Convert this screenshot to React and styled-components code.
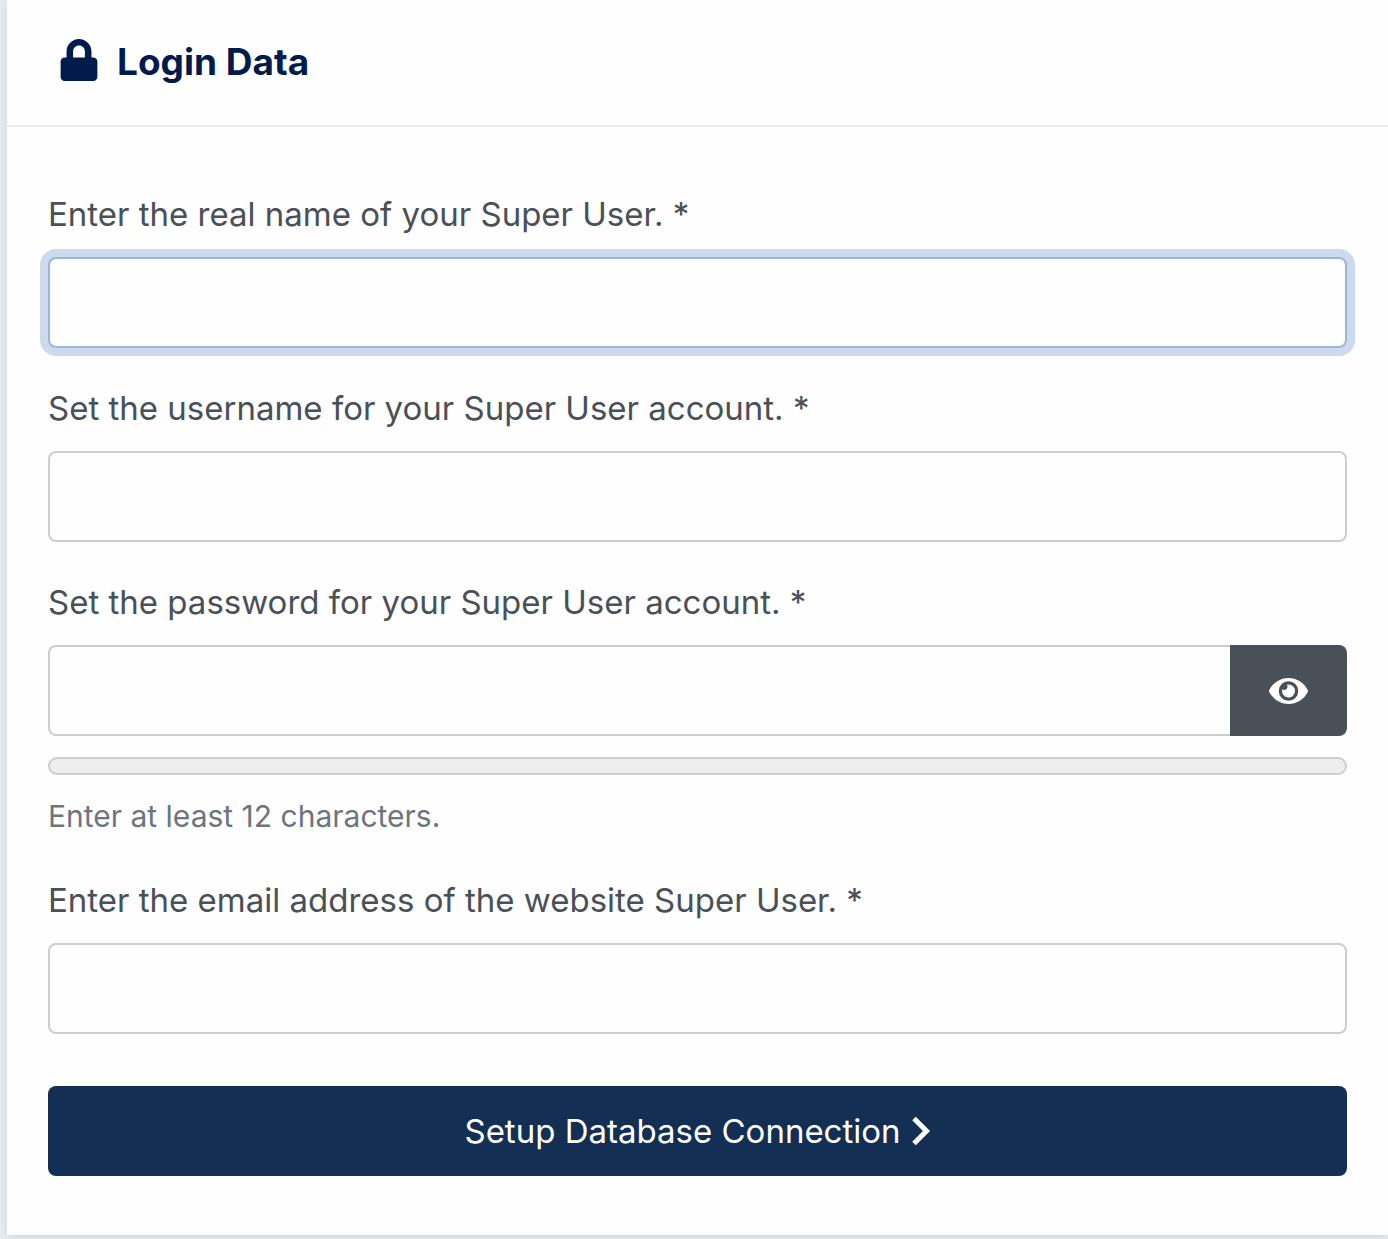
import React, { useState } from "react";
import styled, { createGlobalStyle } from "styled-components";
import { FaLock, FaEye } from "react-icons/fa";

const GlobalStyle = createGlobalStyle`
  *, *::before, *::after { box-sizing: border-box; }
  body {
    margin: 0;
    background: #eaeff4;
    color: #495057;
    font-family: Inter, "Liberation Sans", sans-serif;
    font-size: 33px;
    line-height: 50px;
  }
  button, input { font: inherit; }
`;

const Page = styled.main`
  padding: 0 0 4px 7px;
  overflow: hidden;
`;

const Card = styled.section`
  background: #fefefe;
  box-shadow: 0 2px 12px rgba(30, 45, 50, 0.15);
`;

const CardHeader = styled.header`
  display: flex;
  align-items: center;
  gap: 19px;
  padding: 36px 53px 37px;
  border-bottom: 2px solid #ededee;
  color: #001b4c;

  svg { width: 38px; height: 42px; margin-bottom: 4px; }
`;

const Title = styled.h2`
  margin: 0;
  font-size: 37px;
  font-weight: 700;
  line-height: 52px;
`;

const Form = styled.form`
  display: flex;
  flex-direction: column;
  gap: 35px;
  padding: 62px 41px 59px;
`;

const Field = styled.div`
  display: flex;
  flex-direction: column;
`;

const Label = styled.label`
  margin-bottom: 18px;
`;

const Input = styled.input`
  width: 100%;
  min-width: 0;
  height: 91px;
  padding: 0 26px;
  border: 2px solid ${(p) => (p.$active ? "#97b7dd" : "#cdcdcd")};
  border-radius: 8px;
  background: #fefefe;
  color: inherit;
  outline: none;
  box-shadow: ${(p) => (p.$active ? "0 0 0 8px #cddaed" : "none")};

  &:focus {
    border-color: #97b7dd;
    box-shadow: 0 0 0 8px #cddaed;
  }
`;

const InputGroup = styled.div`
  display: flex;

  ${Input} {
    border-right: 0;
    border-radius: 8px 0 0 8px;
  }
`;

const RevealButton = styled.button`
  display: flex;
  flex: none;
  align-items: center;
  justify-content: center;
  width: 117px;
  border: 0;
  border-radius: 0 8px 8px 0;
  background: #495057;
  color: #fff;
  cursor: pointer;

  svg { width: 39px; height: 36px; }
`;

const Meter = styled.div`
  height: 18px;
  margin: 21px 0 18px;
  border: 2px solid #cdcdcd;
  border-radius: 9px;
  background: #eee;
`;

const Help = styled.div`
  color: #6d757e;
  font-size: 30px;
  line-height: 47px;
`;

const SubmitButton = styled.button`
  display: flex;
  align-items: center;
  justify-content: center;
  gap: 10px;
  height: 90px;
  margin-top: 17px;
  border: 0;
  border-radius: 8px;
  background: #132f53;
  color: #fff;
  cursor: pointer;
`;

const Chevron = () => (
  <svg width="20" height="30" viewBox="0 0 20 30" fill="none" stroke="currentColor" strokeWidth="5" aria-hidden="true">
    <path d="M3 2.5L15.5 15L3 27.5" />
  </svg>
);

export default function App() {
  const [visible, setVisible] = useState(false);

  return (
    <>
      <GlobalStyle />
      <Page>
        <Card>
          <CardHeader>
            <FaLock aria-hidden="true" />
            <Title>Login Data</Title>
          </CardHeader>
          <Form onSubmit={(e) => e.preventDefault()}>
            <Field>
              <Label htmlFor="admin-name">Enter the real name of your Super User. *</Label>
              <Input id="admin-name" type="text" $active />
            </Field>
            <Field>
              <Label htmlFor="admin-username">Set the username for your Super User account. *</Label>
              <Input id="admin-username" type="text" />
            </Field>
            <Field>
              <Label htmlFor="admin-password">Set the password for your Super User account. *</Label>
              <InputGroup>
                <Input
                  id="admin-password"
                  type={visible ? "text" : "password"}
                  aria-describedby="password-help"
                />
                <RevealButton
                  type="button"
                  aria-label="Show password"
                  onClick={() => setVisible(!visible)}
                >
                  <FaEye aria-hidden="true" />
                </RevealButton>
              </InputGroup>
              <Meter role="meter" aria-label="Password strength" aria-valuemin={0} aria-valuemax={100} aria-valuenow={0} />
              <Help id="password-help">Enter at least 12 characters.</Help>
            </Field>
            <Field>
              <Label htmlFor="admin-email">Enter the email address of the website Super User. *</Label>
              <Input id="admin-email" type="email" />
            </Field>
            <SubmitButton type="submit">
              Setup Database Connection
              <Chevron />
            </SubmitButton>
          </Form>
        </Card>
      </Page>
    </>
  );
}
